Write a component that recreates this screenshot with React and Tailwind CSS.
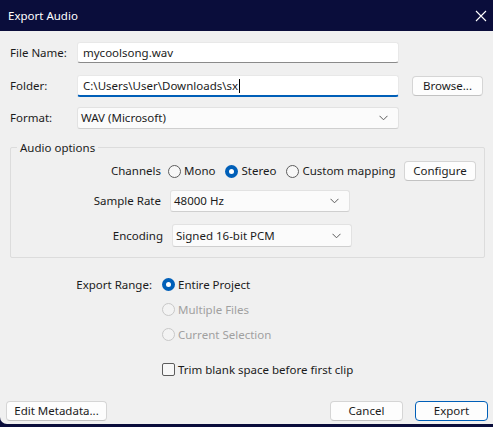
import React from "react";

const Radio = ({ checked, disabled, label }) => (
    <div className={"flex items-center whitespace-nowrap " + (disabled ? "text-[#a0a0a0]" : "text-[#1b1b1b]")}>
        {checked ? (
            <span className="w-[13px] h-[13px] rounded-full bg-[#005fb8] flex items-center justify-center">
                <span className="w-[5px] h-[5px] rounded-full bg-white" />
            </span>
        ) : (
            <span
                className={
                    "w-[13px] h-[13px] rounded-full border " +
                    (disabled ? "border-[#c8c8c8] bg-[#f3f3f3]" : "border-[#5c5c5c] bg-[#f7f7f7]")
                }
            />
        )}
        <span className="ml-[3px]">{label}</span>
    </div>
);

const Select = ({ value, className }) => (
    <div
        className={
            "flex items-center justify-between bg-[#fbfbfb] border border-[#e2e2e2] border-b-[#cfcfcf] rounded-[3px] pl-[3px] pr-[10px] " +
            className
        }
    >
        <span>{value}</span>
        <svg width="9" height="6" viewBox="0 0 9 6" fill="none">
            <path d="M0.5 0.8 L4.5 4.8 L8.5 0.8" stroke="#5a5a5a" strokeWidth="1" />
        </svg>
    </div>
);

const Button = ({ children, className, primary }) => (
    <div
        className={
            "h-[20px] flex items-center justify-center bg-[#fdfdfd] rounded-[4px] border whitespace-nowrap " +
            (primary ? "border-[#005fb8]" : "border-[#d5d5d5] border-b-[#c2c2c2]") +
            " " +
            className
        }
    >
        {children}
    </div>
);

const App = () => {
    return (
        <div
            className="w-[493px] h-[427px] bg-[#0a0d3b] overflow-hidden text-[11.5px] leading-none text-[#1b1b1b]"
            style={{ fontFamily: '"Segoe UI", "Noto Sans", sans-serif' }}
        >
            {/* title bar */}
            <div className="h-[31px] flex items-center justify-between pl-[8px] pr-[6px] text-white text-[11.5px]">
                <span>Export Audio</span>
                <svg width="12" height="12" viewBox="0 0 12 12">
                    <path d="M1 1 L11 11 M11 1 L1 11" stroke="#ffffff" strokeWidth="1.1" />
                </svg>
            </div>

            <div className="h-[393px] bg-[#f0f0f0] rounded-bl-[7px] flex flex-col">
                {/* file name */}
                <div className="flex items-center mt-[11px] pl-[10px]">
                    <span className="w-[67px]">File Name:</span>
                    <div className="w-[322px] h-[21px] bg-white border border-[#e8e8e8] border-b-[#8a8a8a] rounded-[3px] flex items-center pl-[5px]">
                        mycoolsong.wav
                    </div>
                </div>

                {/* folder */}
                <div className="flex items-center mt-[12px] pl-[10px]">
                    <span className="w-[67px]">Folder:</span>
                    <div className="w-[322px] h-[22px] bg-white border border-[#e8e8e8] border-b-2 border-b-[#005fb8] rounded-[3px] flex items-center pl-[5px]">
                        C:\Users\User\Downloads\sx
                        <span className="w-px h-[14px] bg-black ml-[1px]" />
                    </div>
                    <Button className="w-[71px] ml-[13px]">Browse...</Button>
                </div>

                {/* format */}
                <div className="flex items-center mt-[10px] pl-[10px]">
                    <span className="w-[67px]">Format:</span>
                    <Select value="WAV (Microsoft)" className="w-[322px] h-[22px]" />
                </div>

                {/* audio options */}
                <div className="relative mt-[18px] ml-[10px] w-[475px] h-[111px] border border-[#dcdcdc] rounded-[2px] flex flex-col">
                    <span className="absolute -top-[6px] left-[6px] px-[3px] bg-[#f0f0f0]">Audio options</span>

                    <div className="flex items-center mt-[13px] h-[20px]">
                        <span className="w-[150px] text-right">Channels</span>
                        <div className="ml-[7px] flex items-center gap-[10px]">
                            <Radio label="Mono" />
                            <Radio label="Stereo" checked />
                            <Radio label="Custom mapping" />
                        </div>
                        <Button className="w-[72px] ml-auto mr-[8px]">Configure</Button>
                    </div>

                    <div className="flex items-center mt-[9px]">
                        <span className="w-[150px] text-right">Sample Rate</span>
                        <Select value="48000 Hz" className="w-[180px] h-[22px] ml-[9px]" />
                    </div>

                    <div className="flex items-center mt-[12px]">
                        <span className="w-[152px] text-right">Encoding</span>
                        <Select value="Signed 16-bit PCM" className="w-[180px] h-[23px] ml-[9px]" />
                    </div>
                </div>

                {/* export range */}
                <div className="flex mt-[20px]">
                    <span className="w-[152px] text-right h-[13px] flex items-center justify-end">Export Range:</span>
                    <div className="ml-[10px] flex flex-col gap-[12px]">
                        <Radio label="Entire Project" checked />
                        <Radio label="Multiple Files" disabled />
                        <Radio label="Current Selection" disabled />
                    </div>
                </div>

                <div className="flex items-center mt-[22px] ml-[162px]">
                    <span className="w-[13px] h-[13px] rounded-[2px] border border-[#5c5c5c] bg-[#f7f7f7]" />
                    <span className="ml-[3px]">Trim blank space before first clip</span>
                </div>

                {/* bottom buttons */}
                <div className="flex items-center mt-[25px] pl-[6px]">
                    <Button className="w-[101px]">Edit Metadata...</Button>
                    <Button className="w-[73px] ml-auto">Cancel</Button>
                    <Button className="w-[73px] ml-[12px] mr-[5px]" primary>
                        Export
                    </Button>
                </div>
            </div>
        </div>
    );
};

export default App;
